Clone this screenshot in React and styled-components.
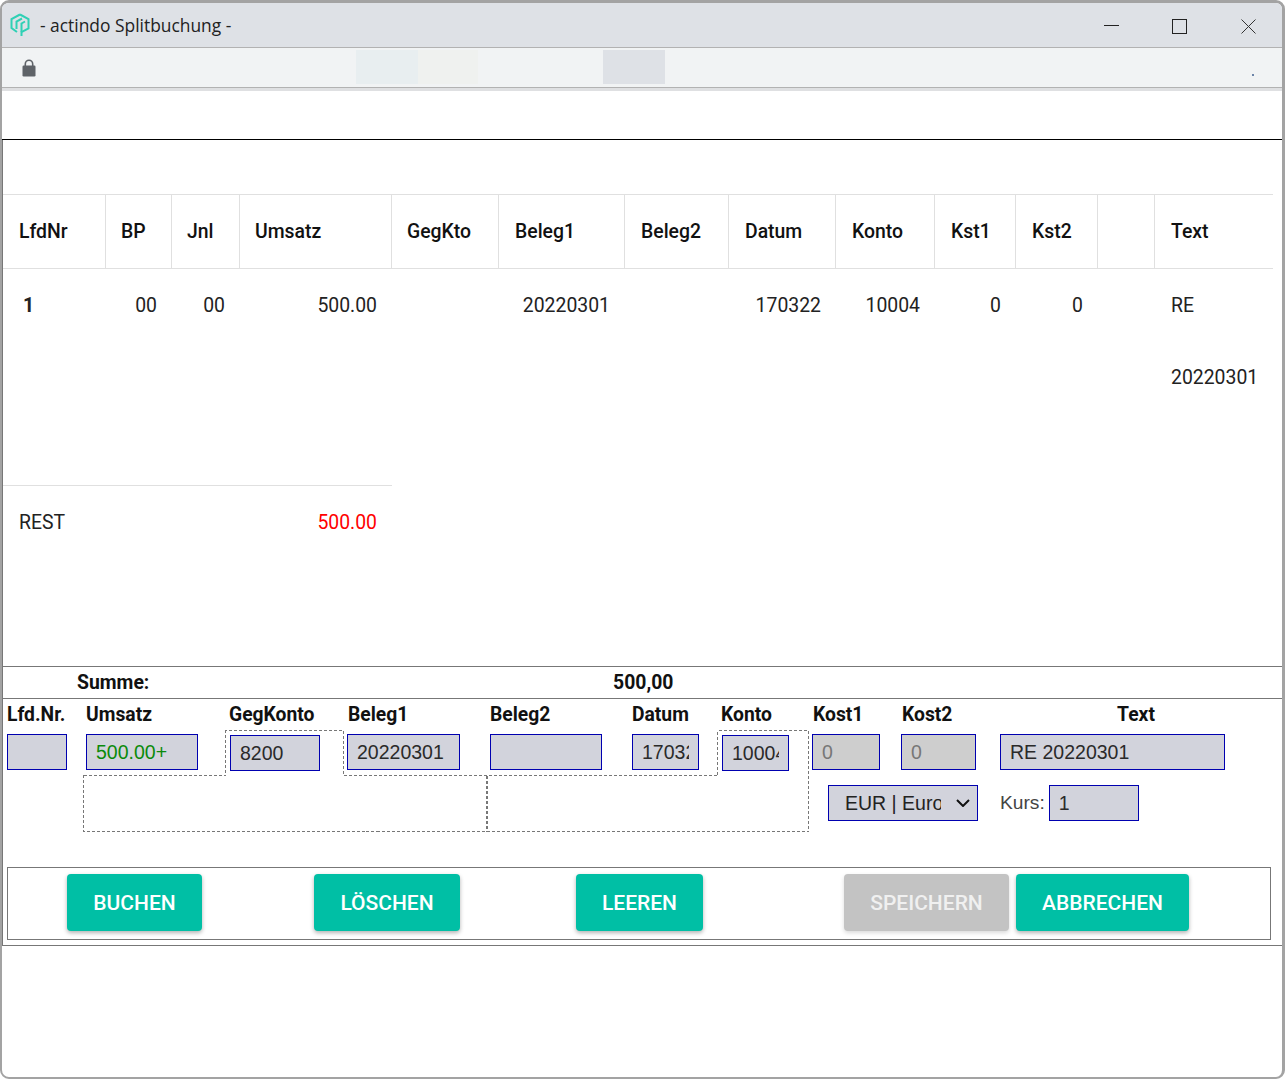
import styled, { createGlobalStyle } from "styled-components";

const Global = createGlobalStyle`
  html, body {
    margin: 0;
    padding: 0;
    background: #fff;
    overflow: hidden;
  }
  * {
    box-sizing: border-box;
  }
`;

const Win = styled.div`
  width: 1285px;
  height: 1079px;
  background: #fff;
  border: 2px solid #a3a3a3;
  border-right-width: 3px;
  border-top-width: 3px;
  border-radius: 9px;
  overflow: hidden;
  display: flex;
  flex-direction: column;
  font-family: Roboto, sans-serif;
  color: #111;
`;
const TitleBar = styled.div`
  height: 45px;
  flex: none;
  background: #dee1e6;
  border-bottom: 1px solid #b2b2b2;
  display: flex;
  align-items: center;
  padding-left: 7px;
`;
const Title = styled.span`
  margin-left: 9px;
  font-family: "Open Sans", sans-serif;
  font-size: 17.4px;
  color: #222;
`;
const Controls = styled.div`
  margin-left: auto;
  display: flex;
  gap: 54px;
  padding-right: 26px;
  margin-top: 2px;
`;
const AddressBar = styled.div`
  height: 40px;
  flex: none;
  background: #f1f3f4;
  border-bottom: 1px solid #b2b2b2;
  display: flex;
  align-items: center;
  padding-left: 20px;
  position: relative;
`;
const Patch = styled.div`
  position: absolute;
  top: 2px;
  height: 34px;
  left: ${(p) => p.$left}px;
  width: ${(p) => p.$width}px;
  background: ${(p) => p.$color};
`;
const Dot = styled.span`
  position: absolute;
  left: 1250px;
  top: 26px;
  width: 2px;
  height: 2px;
  background: #6c84a8;
`;
const Strip = styled.div`
  height: 52px;
  flex: none;
  border-top: 3px solid #dfe0e2;
  border-bottom: 1px solid #000;
`;
const Panel = styled.div`
  flex: none;
  height: 806px;
  border-left: 1px solid #777;
  border-bottom: 1px solid #777;
  display: flex;
  flex-direction: column;
`;
const TableArea = styled.div`
  height: 526px;
  flex: none;
  padding-top: 54px;
`;
const Table = styled.table`
  table-layout: fixed;
  border-collapse: separate;
  border-spacing: 0;
  width: 1270px;
  font-size: 19.4px;
  line-height: 72px;
`;
const HeadCell = styled.th`
  font-weight: 500;
  text-align: left;
  padding: 0 0 0 16px;
  height: 75px;
  border-top: 1px solid #e0e0e0;
  border-bottom: 1px solid #e0e0e0;
  border-right: 1px solid #e0e0e0;
  white-space: nowrap;
  &:nth-child(n + 2):nth-child(-n + 5) {
    padding-left: 15px;
  }
  &:last-child {
    border-right: 0;
  }
`;
const Cell = styled.td`
  font-weight: 400;
  vertical-align: top;
  padding: 1px 15px 0 16px;
  height: 216px;
  text-align: ${(p) => (p.$left ? "left" : "right")};
  color: #222;
`;
const IdCell = styled(Cell)`
  font-weight: 700;
  padding-left: 20px;
`;
const RestCell = styled.td`
  height: 73px;
  padding: 1px 15px 0 16px;
  border-top: 1px solid #e0e0e0;
  text-align: ${(p) => (p.$red ? "right" : "left")};
  color: ${(p) => (p.$red ? "#f00" : "#222")};
`;
const SumRow = styled.div`
  height: 33px;
  flex: none;
  border-top: 1px solid #777;
  border-bottom: 1px solid #777;
  display: flex;
  align-items: center;
  padding-left: 74px;
  font-weight: 700;
  font-size: 19.4px;
`;
const SumLabel = styled.span`
  width: 536px;
`;
const Form = styled.div`
  position: relative;
  padding-left: 4px;
  display: grid;
  grid-template-columns: 79px 144px 117px 143px 142px 90px 90px 89px 99px 272px;
  grid-template-rows: 35px 51px 36px;
`;
const Label = styled.div`
  font-weight: 700;
  font-size: 19.3px;
  line-height: 32px;
  white-space: nowrap;
  margin-left: ${(p) => p.$shift || 0}px;
  text-align: ${(p) => (p.$center ? "center" : "left")};
`;
const Field = styled.input`
  display: block;
  height: 36px;
  width: ${(p) => p.$w}px;
  margin-top: ${(p) => (p.$inset ? 1 : 0)}px;
  padding: 0 9px;
  border: 1px solid #0000b0;
  border-radius: 0;
  outline: none;
  background: ${(p) => (p.disabled ? "#cecece" : "#d2d3dc")};
  color: ${(p) => (p.disabled ? "#777" : p.$green ? "#0a8a0a" : "#2a2a2a")};
  font-family: "Liberation Sans", Arial, sans-serif;
  font-size: 19.5px;
  opacity: 1;
`;
const CurrencyCell = styled.div`
  grid-column: 8 / span 2;
  grid-row: 3;
  padding-left: 16px;
  position: relative;
`;
const Currency = styled.select`
  display: block;
  appearance: none;
  width: 150px;
  height: 36px;
  padding: 0 36px 0 16px;
  border: 1px solid #0000b0;
  border-radius: 0;
  background-color: #d2d3dc;
  color: #222;
  font-family: "Liberation Sans", Arial, sans-serif;
  font-size: 19.5px;
`;
const Chevron = styled.svg`
  position: absolute;
  left: 144px;
  top: 14px;
  pointer-events: none;
`;
const KursCell = styled.div`
  grid-column: 10;
  grid-row: 3;
  display: flex;
  align-items: center;
  gap: 4px;
  font-family: "Liberation Sans", Arial, sans-serif;
  font-size: 19.2px;
  color: #444;
`;
const DashedOutline = styled.svg`
  position: absolute;
  left: 0;
  top: 0;
  width: 1000px;
  height: 140px;
  pointer-events: none;
`;
const ButtonBox = styled.div`
  margin: 46px 0 0 4px;
  width: 1264px;
  height: 73px;
  border: 1px solid #777;
  display: flex;
  align-items: flex-start;
  padding-top: 6px;
`;
const Action = styled.button`
  height: 57px;
  width: ${(p) => p.$w}px;
  margin-left: ${(p) => p.$left}px;
  border: 0;
  border-radius: 4px;
  padding: 0;
  background: ${(p) => (p.disabled ? "#c3c3c3" : "#00bfa5")};
  color: ${(p) => (p.disabled ? "#f0f0f0" : "#fff")};
  font-family: Roboto, sans-serif;
  font-weight: 500;
  font-size: 21px;
  box-shadow: 0 2px 4px rgba(0, 0, 0, ${(p) => (p.disabled ? 0.15 : 0.3)});
`;

const heads = ["LfdNr", "BP", "Jnl", "Umsatz", "GegKto", "Beleg1", "Beleg2", "Datum", "Konto", "Kst1", "Kst2", "", "Text"];
const widths = [103, 66, 68, 152, 107, 126, 104, 107, 99, 81, 82, 57, 118];

function Logo() {
  return (
    <svg width="22" height="24" viewBox="0 0 22 24" fill="none" stroke="#2fd0b5" strokeWidth="2">
      <path d="M11 1.5 L19.5 6 V15.5 L12.5 19 V23" />
      <path d="M11 1.5 L2.5 6 V15 L8 19" />
      <path d="M7.5 16 V8.5 L13 5.5" />
      <path d="M12.5 19 V10.5 L16 8.5" />
    </svg>
  );
}

function Lock() {
  return (
    <svg width="14" height="18" viewBox="0 0 14 18" fill="#5f6368">
      <path d="M2.5 8 V5 a4.5 4.5 0 0 1 9 0 V8 h-1.6 V5 a2.9 2.9 0 0 0 -5.8 0 V8 Z" />
      <rect x="0.5" y="6.5" width="13" height="11" rx="1.2" />
    </svg>
  );
}

export default function App() {
  return (
    <Win>
      <Global />
      <TitleBar>
        <Logo />
        <Title>- actindo Splitbuchung -</Title>
        <Controls>
          <svg width="14" height="15" viewBox="0 0 14 15" stroke="#222" fill="none" overflow="visible">
            <path d="M0 6.5 H15" />
          </svg>
          <svg width="15" height="15" viewBox="0 0 15 15" stroke="#222" fill="none">
            <rect x="0.5" y="0.5" width="14" height="14" />
          </svg>
          <svg width="15" height="15" viewBox="0 0 15 15" stroke="#333" fill="none">
            <path d="M0.5 0.5 L14.5 14.5 M14.5 0.5 L0.5 14.5" />
          </svg>
        </Controls>
      </TitleBar>
      <AddressBar>
        <Lock />
        <Patch $left={354} $width={62} $color="#e8eef0" />
        <Patch $left={416} $width={60} $color="#eff1ef" />
        <Patch $left={601} $width={62} $color="#dee1e6" />
        <Dot />
      </AddressBar>
      <Strip />
      <Panel>
        <TableArea>
          <Table>
            <colgroup>
              {widths.map((w, i) => (
                <col key={i} width={w} />
              ))}
            </colgroup>
            <thead>
              <tr>
                {heads.map((h, i) => (
                  <HeadCell key={i}>{h}</HeadCell>
                ))}
              </tr>
            </thead>
            <tbody>
              <tr>
                <IdCell $left>1</IdCell>
                <Cell>00</Cell>
                <Cell>00</Cell>
                <Cell>500.00</Cell>
                <Cell></Cell>
                <Cell>20220301</Cell>
                <Cell></Cell>
                <Cell>170322</Cell>
                <Cell>10004</Cell>
                <Cell>0</Cell>
                <Cell>0</Cell>
                <Cell></Cell>
                <Cell $left>
                  RE
                  <br />
                  20220301
                </Cell>
              </tr>
              <tr>
                <RestCell colSpan={3}>REST</RestCell>
                <RestCell $red>500.00</RestCell>
              </tr>
            </tbody>
          </Table>
        </TableArea>
        <SumRow>
          <SumLabel>Summe:</SumLabel>
          <span>500,00</span>
        </SumRow>
        <Form>
          <Label>Lfd.Nr.</Label>
          <Label>Umsatz</Label>
          <Label $shift={-1}>GegKonto</Label>
          <Label $shift={1}>Beleg1</Label>
          <Label>Beleg2</Label>
          <Label>Datum</Label>
          <Label $shift={-1}>Konto</Label>
          <Label $shift={1}>Kost1</Label>
          <Label $shift={1}>Kost2</Label>
          <Label $center>Text</Label>

          <Field $w={60} readOnly value="" />
          <Field $w={112} $green readOnly value="500.00+" />
          <Field $w={90} $inset readOnly value="8200" />
          <Field $w={113} readOnly value="20220301" />
          <Field $w={112} readOnly value="" />
          <Field $w={67} readOnly value="170322" />
          <Field $w={67} $inset readOnly value="10004" />
          <Field $w={68} disabled value="0" />
          <Field $w={75} disabled value="0" />
          <Field $w={225} readOnly value="RE 20220301" />

          <CurrencyCell>
            <Currency defaultValue="EUR">
              <option value="EUR">EUR | Euro</option>
            </Currency>
            <Chevron width="14" height="8" viewBox="0 0 14 8" fill="none" stroke="#111" strokeWidth="2">
              <path d="M1 1 L7 7 L13 1" />
            </Chevron>
          </CurrencyCell>
          <KursCell>
            Kurs:
            <Field $w={90} readOnly value="1" />
          </KursCell>

          <DashedOutline viewBox="0 0 1000 140" fill="none" stroke="#777" strokeDasharray="3 2" shapeRendering="crispEdges">
            <path d="M80.5 76.5 H222.5 V31.5 H340.5 V76.5 H714.5 V31.5 H805.5 V132.5 H80.5 Z" />
            <path d="M483.5 76.5 V132.5 M484.5 76.5 V132.5" />
          </DashedOutline>
        </Form>
        <ButtonBox>
          <Action $w={135} $left={59}>BUCHEN</Action>
          <Action $w={146} $left={112}>LÖSCHEN</Action>
          <Action $w={127} $left={116}>LEEREN</Action>
          <Action $w={165} $left={141} disabled>SPEICHERN</Action>
          <Action $w={173} $left={7}>ABBRECHEN</Action>
        </ButtonBox>
      </Panel>
    </Win>
  );
}
